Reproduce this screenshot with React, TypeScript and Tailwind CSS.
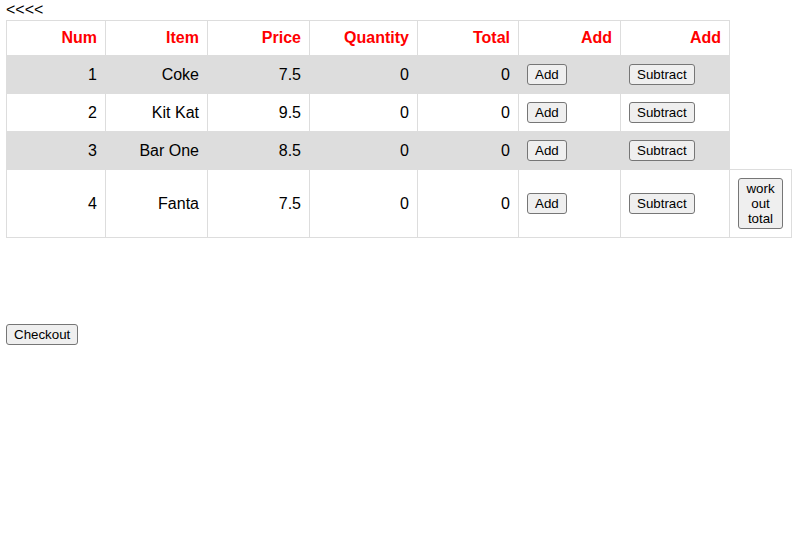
import React from 'react'

type Item = { num: number; name: string; price: number; qty: number; total: number }

const items: Item[] = [
  { num: 1, name: 'Coke', price: 7.5, qty: 0, total: 0 },
  { num: 2, name: 'Kit Kat', price: 9.5, qty: 0, total: 0 },
  { num: 3, name: 'Bar One', price: 8.5, qty: 0, total: 0 },
  { num: 4, name: 'Fanta', price: 7.5, qty: 0, total: 0 },
]

const btn =
  'bg-[#efefef] border border-[#767676] rounded-[3px] px-[7px] py-[2px] text-[13.33px] leading-[normal] text-black'

const cell = 'border border-[#dddddd] p-2 text-right'
const head = 'border border-[#dddddd] p-2 text-right font-bold text-[#ff0000]'

const App: React.FC = () => {
  return (
    <div className="min-h-[535px] bg-white px-[6px] text-[16px] leading-[normal] text-black font-['Liberation_Sans',Arial,sans-serif]">
      <div className="h-[20px] pt-[1px]">&lt;&lt;&lt;&lt;</div>
      <table className="table-fixed w-[786px]">
        <colgroup>
          <col className="w-[99px]" />
          <col className="w-[102px]" />
          <col className="w-[102px]" />
          <col className="w-[108px]" />
          <col className="w-[101px]" />
          <col className="w-[102px]" />
          <col className="w-[109px]" />
          <col className="w-[62px]" />
        </colgroup>
        <tbody>
          <tr>
            <th className={head}>Num</th>
            <th className={head}>Item</th>
            <th className={head}>Price</th>
            <th className={head}>Quantity</th>
            <th className={head}>Total</th>
            <th className={head}>Add</th>
            <th className={head}>Add</th>
          </tr>
          {items.map((it, i) => (
            <tr key={it.num} className={i % 2 === 0 ? 'bg-[#dddddd]' : ''}>
              <td className={cell}>{it.num}</td>
              <td className={cell}>{it.name}</td>
              <td className={cell}>{it.price}</td>
              <td className={cell}>{it.qty}</td>
              <td className={cell}>{it.total}</td>
              <td className="border border-[#dddddd] p-2 text-left">
                <button className={btn}>Add</button>
              </td>
              <td className="border border-[#dddddd] p-2 text-left">
                <button className={btn}>Subtract</button>
              </td>
              {it.num === 4 && (
                <td className="border border-[#dddddd] p-2 text-left bg-white">
                  <button className={btn + ' w-[45px]'}>work out total</button>
                </td>
              )}
            </tr>
          ))}
        </tbody>
      </table>
      <div className="mt-[86px]">
        <button className={btn}>Checkout</button>
      </div>
    </div>
  )
}

export default App
